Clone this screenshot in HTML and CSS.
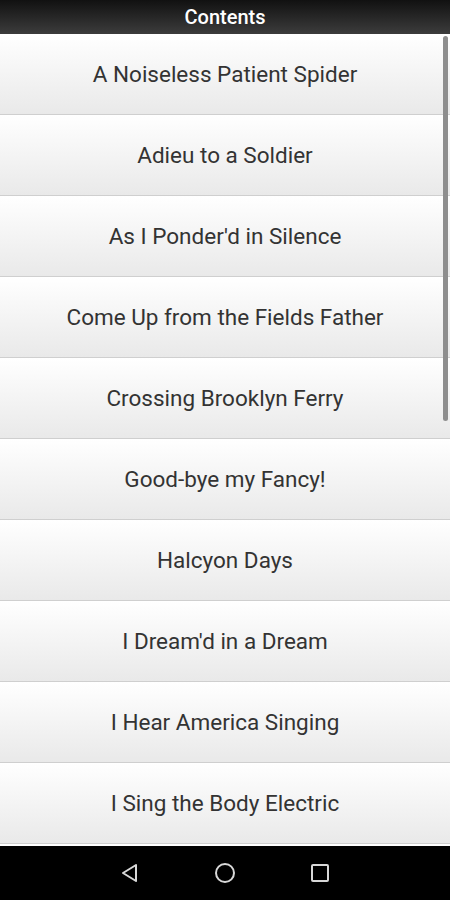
FILE: index.html
```html
<!DOCTYPE html>
<html lang="en">
  <head>
    <meta charset="UTF-8" />
    <meta name="viewport" content="width=device-width, initial-scale=1.0" />
    <title>Contents</title>
    <link rel="stylesheet" href="styles.css">
  </head>
  <body>
    <div class="app">
      <header class="titlebar">Contents</header>
      <div class="list-wrap">
        <ul class="poems">
          <li class="poem">A Noiseless Patient Spider</li>
          <li class="poem">Adieu to a Soldier</li>
          <li class="poem">As I Ponder'd in Silence</li>
          <li class="poem">Come Up from the Fields Father</li>
          <li class="poem">Crossing Brooklyn Ferry</li>
          <li class="poem">Good-bye my Fancy!</li>
          <li class="poem">Halcyon Days</li>
          <li class="poem">I Dream'd in a Dream</li>
          <li class="poem">I Hear America Singing</li>
          <li class="poem">I Sing the Body Electric</li>
        </ul>
        <div class="scroll-thumb"></div>
      </div>
      <nav class="navbar">
        <svg width="24" height="24" viewBox="0 0 24 24">
          <path d="M18 4 L5 12 L18 20 Z" fill="none" stroke="#d8d8d8" stroke-width="2" stroke-linejoin="round" />
        </svg>
        <svg width="24" height="24" viewBox="0 0 24 24">
          <circle cx="12" cy="12" r="9" fill="none" stroke="#d8d8d8" stroke-width="2" />
        </svg>
        <svg width="24" height="24" viewBox="0 0 24 24">
          <rect x="4" y="4" width="16" height="16" rx="1" fill="none" stroke="#d8d8d8" stroke-width="2" />
        </svg>
      </nav>
    </div>
  </body>
</html>
```
FILE: styles.css
```css
/* Contents list */
body {
  margin: 0;
  padding: 0;
  font-family: Roboto, "Liberation Sans", sans-serif;
  background-color: #fff;
}

.app {
  display: flex;
  flex-direction: column;
  height: 900px;
}

.titlebar {
  height: 34px;
  line-height: 35px;
  text-align: center;
  color: #fff;
  font-size: 20px;
  font-weight: 500;
  background: linear-gradient(#111, #3c3c3c);
}

.list-wrap {
  position: relative;
  flex: 1;
  overflow: hidden;
}

.poems {
  list-style: none;
  margin: 0;
  padding: 0;
}

.poem {
  display: flex;
  align-items: center;
  justify-content: center;
  height: 80px;
  border-bottom: 1px solid #cfcfcf;
  background: linear-gradient(#fff, #e9e9e9);
  color: #333;
  font-size: 22.5px;
}

.scroll-thumb {
  position: absolute;
  top: 2px;
  right: 2px;
  width: 5px;
  height: 385px;
  border-radius: 3px;
  background-color: #8e8e8e;
}

.navbar {
  height: 54px;
  background-color: #000;
  display: flex;
  align-items: center;
  justify-content: center;
  gap: 71px;
}
```
